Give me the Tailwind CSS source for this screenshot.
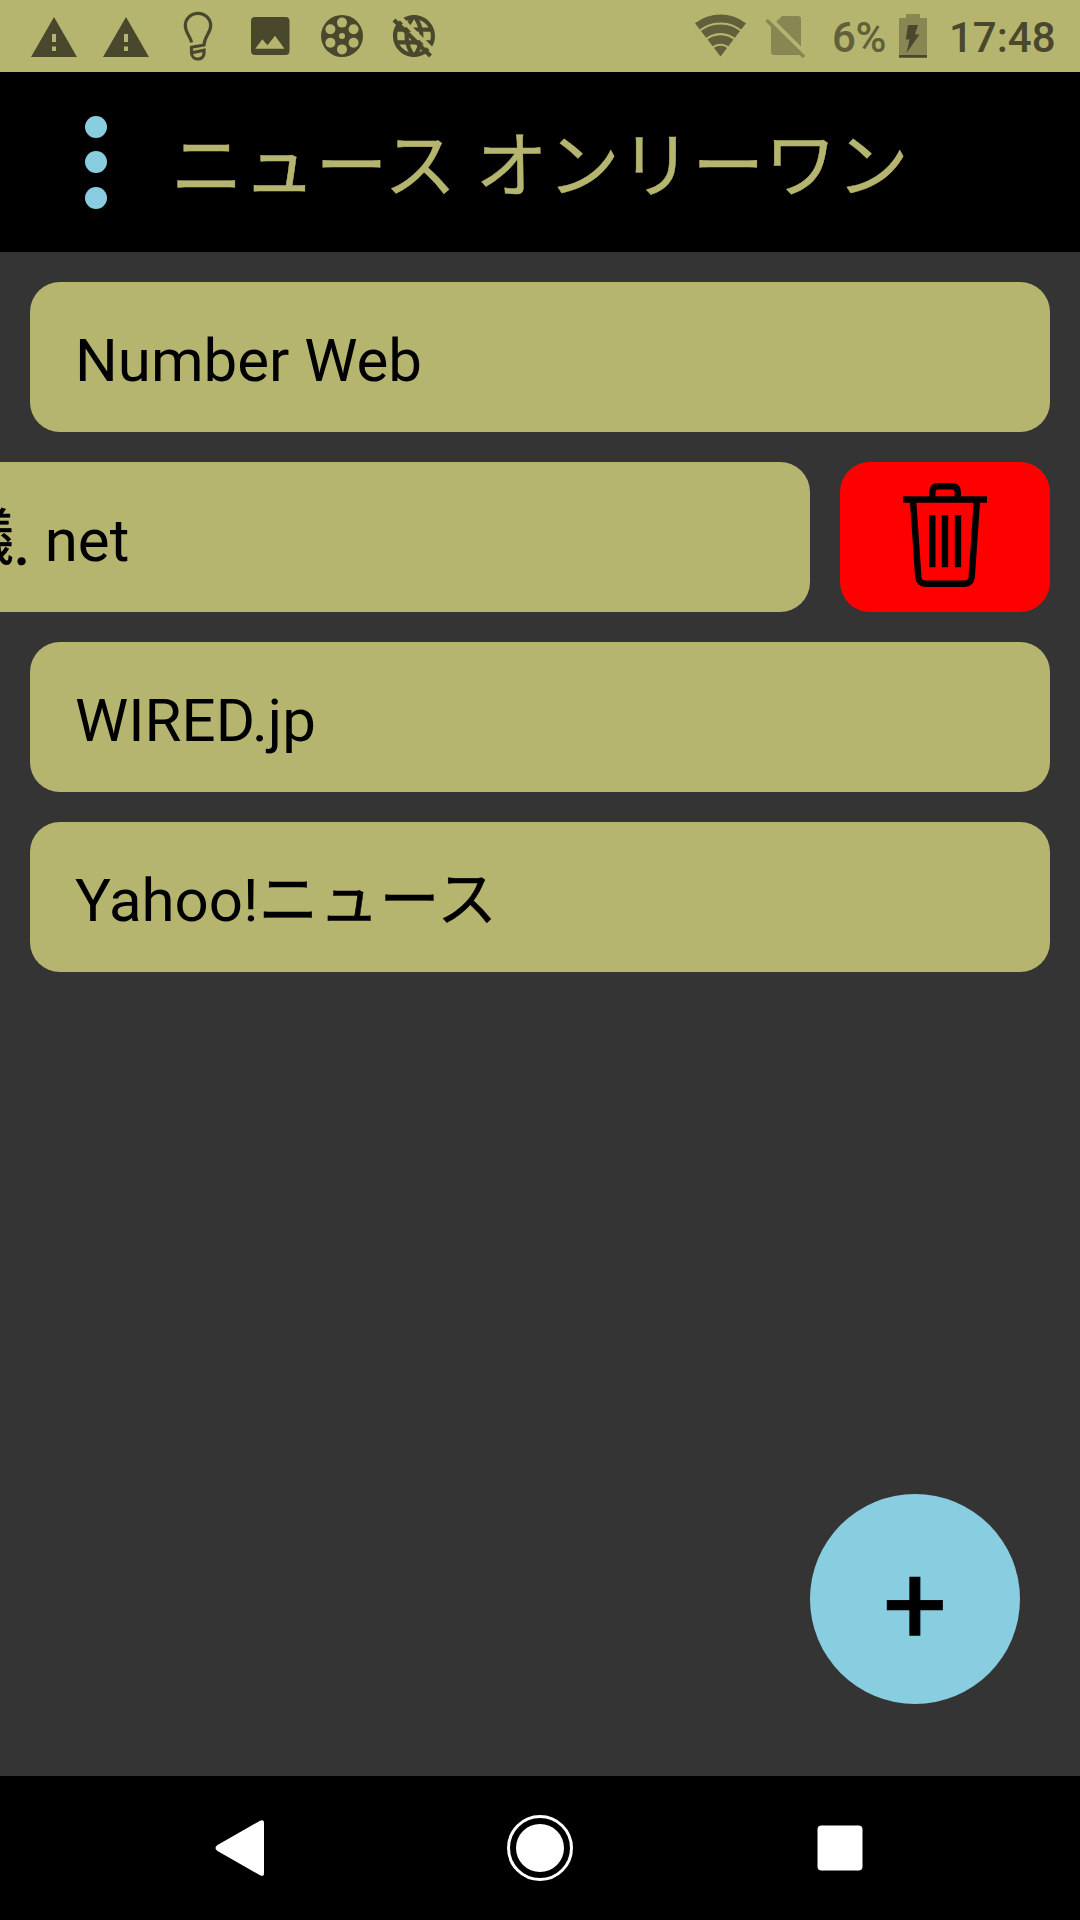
<!DOCTYPE html>
<html lang="ja">
<head>
<meta charset="utf-8">
<title>ニュース オンリーワン</title>
<script src="https://cdn.jsdelivr.net/npm/@tailwindcss/browser@4"></script>
</head>
<body class="flex h-[1920px] w-[1080px] flex-col overflow-hidden bg-[#343434] font-['Roboto','Noto_Sans_CJK_JP',sans-serif] text-black">

<!-- Status bar -->
<div class="flex h-[72px] shrink-0 items-center bg-[#b6b570] pl-[18px] text-[#49482c]">
  <svg class="size-[72px] shrink-0" viewBox="0 0 72 72" fill="currentColor"><path fill-rule="evenodd" d="M13 57 36 17 59 57ZM34 34V42H38V34ZM34 46.5V51H38V46.5Z"/></svg>
  <svg class="size-[72px] shrink-0" viewBox="0 0 72 72" fill="currentColor"><path fill-rule="evenodd" d="M13 57 36 17 59 57ZM34 34V42H38V34ZM34 46.5V51H38V46.5Z"/></svg>
  <svg class="size-[72px] shrink-0" viewBox="0 0 72 72" fill="none" stroke="currentColor" stroke-width="3.2"><path d="M29.5 42.5C28.5 36 23.3 33 23.3 25.5A12.7 12.2 0 0 1 48.7 25.5C48.7 33 42.5 36 42 45L29.5 47.3V53C30 61 42 61 42 53V50.3L30 52.8"/></svg>
  <svg class="size-[72px] shrink-0" viewBox="0 0 72 72" fill="currentColor"><path fill-rule="evenodd" d="M21 17H51.5Q55.5 17 55.5 21V51Q55.5 55 51.5 55H21Q17 55 17 51V21Q17 17 21 17ZM21.3 48.8H50.5L41 35.7 33.5 45.2 28.3 39.2Z"/></svg>
  <svg class="size-[72px] shrink-0" viewBox="0 0 72 72"><circle cx="36" cy="36" r="21" fill="currentColor"/><g fill="#b6b570"><circle cx="36" cy="36" r="3"/><circle cx="36" cy="22.6" r="5"/><circle cx="36" cy="49.4" r="5"/><circle cx="24.4" cy="29.3" r="5"/><circle cx="47.6" cy="29.3" r="5"/><circle cx="24.4" cy="42.7" r="5"/><circle cx="47.6" cy="42.7" r="5"/></g></svg>
  <svg class="size-[72px] shrink-0" viewBox="0 0 72 72"><path transform="translate(10.8 10.8) scale(2.1)" fill="currentColor" d="M11.99 2C6.47 2 2 6.48 2 12s4.47 10 9.99 10C17.52 22 22 17.52 22 12S17.52 2 11.99 2zm6.93 6h-2.95c-.32-1.25-.78-2.45-1.38-3.56 1.84.63 3.37 1.91 4.33 3.56zM12 4.04c.83 1.2 1.48 2.53 1.91 3.96h-3.82c.43-1.43 1.08-2.76 1.91-3.96zM4.26 14C4.1 13.36 4 12.69 4 12s.1-1.36.26-2h3.38c-.08.66-.14 1.32-.14 2 0 .68.06 1.34.14 2H4.26zm.82 2h2.95c.32 1.25.78 2.45 1.38 3.56-1.84-.63-3.37-1.9-4.33-3.56zm2.95-8H5.08c.96-1.66 2.49-2.93 4.33-3.56C8.81 5.55 8.35 6.75 8.03 8zM12 19.96c-.83-1.2-1.48-2.53-1.91-3.96h3.82c-.43 1.43-1.08 2.76-1.91 3.96zM14.34 14H9.66c-.09-.66-.16-1.32-.16-2 0-.68.07-1.35.16-2h4.68c.09.65.16 1.32.16 2 0 .68-.07 1.34-.16 2zm.25 5.56c.6-1.11 1.06-2.31 1.38-3.56h2.95c-.96 1.65-2.49 2.93-4.33 3.56zM16.36 14c.08-.66.14-1.32.14-2 0-.68-.06-1.34-.14-2h3.38c.16.64.26 1.31.26 2s-.1 1.36-.26 2h-3.38z"/><path d="M19 14.5 57 52.5" stroke="#b6b570" stroke-width="4.5"/><path d="M16 20 52.5 56" stroke="currentColor" stroke-width="4.2"/></svg>

  <div class="ml-auto flex h-full items-center">
    <svg class="h-[72px] w-[70px]" viewBox="685 0 70 72"><path fill="#61603b" d="M720.5 56.5 695 23.2A42 42 0 0 1 746 23.2Z"/><g fill="none" stroke="#b6b570" stroke-width="2.1"><circle cx="720.5" cy="56.5" r="33"/><circle cx="720.5" cy="56.5" r="22.4"/><circle cx="720.5" cy="56.5" r="11.7"/></g></svg>
    <svg class="h-[72px] w-[77px]" viewBox="755 0 77 72"><path fill="#888753" d="M782 16H798Q801 16 801 19V52Q801 55 798 55H774Q771 55 771 52V27Z"/><path d="M768 16.5 809 57.5" stroke="#b6b570" stroke-width="4"/><path d="M766.5 20 804 57" stroke="#888753" stroke-width="3.5"/></svg>
    <span class="w-[60px] pt-1 text-[42px] leading-[68px] font-medium tracking-[-0.3px] text-[#61603b]">6%</span>
    <svg class="h-[72px] w-[57px]" viewBox="892 0 57 72"><path fill="#888753" d="M899 18H906V14H920V18H927V55H899Z"/><path fill="#49482c" d="M899 55H927V57.8H899ZM908 25H918L915 34.5H919.5L906.5 53 909.5 39.5H905.8Z"/></svg>
    <span class="w-[131px] pt-1 text-[42px] leading-[68px] font-medium">17:48</span>
  </div>
</div>

<!-- App bar -->
<header class="flex h-[180px] shrink-0 items-center bg-black pl-[85px] text-[#b6b570]">
  <button class="flex w-[22px] flex-col gap-[13.5px]" aria-label="メニュー">
    <i class="size-[22px] rounded-full bg-[#89cde0]"></i>
    <i class="size-[22px] rounded-full bg-[#89cde0]"></i>
    <i class="size-[22px] rounded-full bg-[#89cde0]"></i>
  </button>
  <h1 class="ml-[64px] pt-[9px] text-[72px] leading-[90px] tracking-[0.25px] whitespace-nowrap [-webkit-text-stroke:0.5px_#b6b570] [word-spacing:1px]">ニュース オンリーワン</h1>
</header>

<!-- Feed list -->
<main class="relative flex grow flex-col gap-[30px] p-[30px] text-[60px] leading-[142px] whitespace-nowrap">
  <div class="h-[150px] rounded-[30px] bg-[#b6b570] px-[45px] pt-[8px]">Number Web</div>
  <div class="-ml-[240px] flex h-[150px] gap-[30px]">
    <div class="w-[1020px] shrink-0 rounded-[30px] bg-[#b6b570] px-[44px] pt-[8px]"><span class="inline-block -translate-y-[2px] [-webkit-text-stroke:0.7px_#000]">不思議</span><span class="inline-block translate-y-[3px] [-webkit-text-stroke:1.6px_#000]">.</span> net</div>
    <button class="flex w-[210px] shrink-0 items-center justify-center rounded-[30px] bg-[#ff0000]" aria-label="削除">
      <svg class="h-[150px] w-[210px]" viewBox="840 462 210 150" fill="none" stroke="#000" stroke-width="6.4"><path d="M903 499.5H987"/><path d="M932.3 498V492.5Q932.3 486.3 938.5 486.3H951.5Q957.8 486.3 957.8 492.5V498"/><path d="M913 500 918.3 577Q919 583.7 925.5 583.7H964.5Q971 583.7 971.7 577L977 500"/><path d="M932.3 515V567.3M945 515V567.3M958 515V567.3"/></svg>
    </button>
  </div>
  <div class="h-[150px] rounded-[30px] bg-[#b6b570] px-[45px] pt-[8px]">WIRED.jp</div>
  <div class="h-[150px] rounded-[30px] bg-[#b6b570] px-[45px] pt-[8px]">Yahoo!<span class="tracking-[0.5px] [-webkit-text-stroke:0.5px_#000]">ニュース</span></div>
  <button class="absolute right-[60px] bottom-[72px] size-[210px] rounded-full bg-[#89cde0] pt-[12px] text-center text-[114px] leading-[198px] [-webkit-text-stroke:0.6px_#000]" aria-label="追加">+</button>
</main>

<!-- Navigation bar -->
<nav class="flex h-[144px] shrink-0 items-center justify-center gap-[228px] bg-black">
  <svg class="size-[72px]" viewBox="0 0 72 72" fill="#fff"><path d="M13.5 33 56 8.8Q60 6.8 60 11V61Q60 65.2 56 63.2L13.5 39Q9.5 36 13.5 33Z"/></svg>
  <svg class="size-[72px]" viewBox="0 0 72 72"><circle cx="36" cy="36" r="31.5" fill="none" stroke="#fff" stroke-width="3"/><circle cx="36" cy="36" r="24" fill="#fff"/></svg>
  <svg class="size-[72px]" viewBox="0 0 72 72"><rect x="13.5" y="13.5" width="45" height="45" rx="4" fill="#fff"/></svg>
</nav>
</body>
</html>
